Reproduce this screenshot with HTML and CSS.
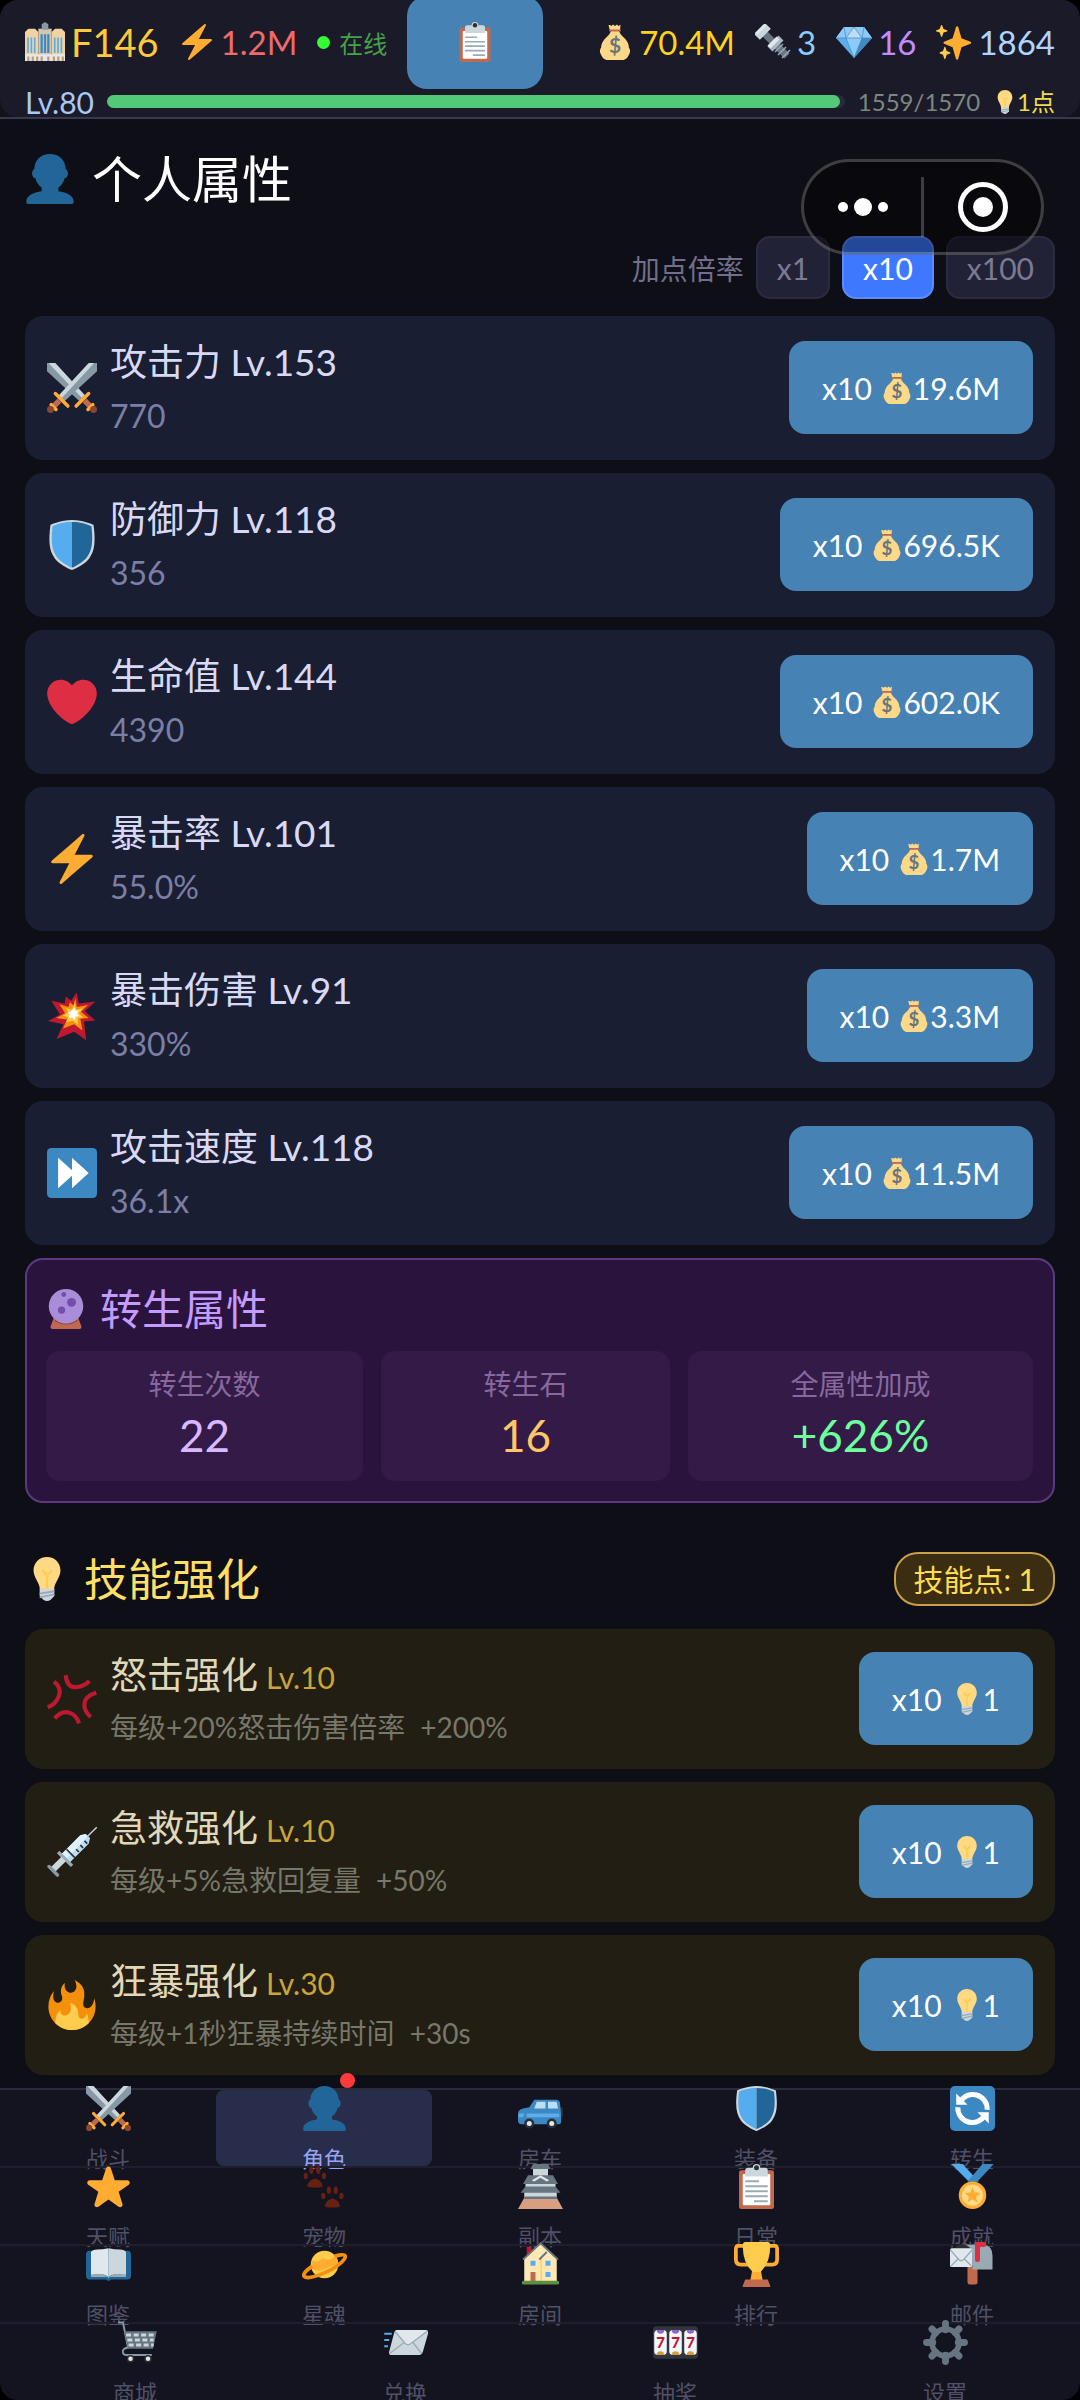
FILE: index.html
```html
<!DOCTYPE html>
<html lang="zh-CN">
<head>
    <meta charset="UTF-8">
    <meta name="viewport" content="width=device-width, initial-scale=1.0">
    <title>个人属性</title>
    <link rel="stylesheet" href="styles.css">
</head>
<body>
    <!-- Icon sprite -->
    <svg class="sprite" aria-hidden="true">
        <symbol id="i-city" viewBox="0 0 36 36">
            <path fill="#F3D2A2" d="M0 9l3-3h6l3 3v26H0zM24 9l3-3h6l3 3v26H24z"/>
            <path fill="#D5C6B0" d="M12 6h12v29H12z"/>
            <path fill="#8899A6" d="M15 2l3-2 3 2v5h-6z"/>
            <path fill="#E6E7E8" d="M0 29h36v6H0z"/>
            <path fill="#55ACEE" d="M2 14h1.500v14H2zM5 14h1.500v14H5zM8 14h1.500v14H8zM26 14h1.500v14H26zM29 14h1.500v14H29zM32 14h1.500v14H32z"/>
            <path fill="#3B88C3" d="M14 11h2v17h-2zM17 11h2v17h-2zM20 11h2v17h-2z"/>
            <path fill="#BE9D78" d="M2 31h2v4H2zM6 31h2v4H6zM10 31h2v4h-2zM14 31h2v4h-2zM20 31h2v4h-2zM25 31h2v4h-2zM29 31h2v4h-2zM33 31h2v4h-2z"/>
        </symbol>
        <symbol id="i-bolt" viewBox="0 0 36 36">
            <path fill="#FFAC33" d="M32.938 15.651C32.792 15.260 32.418 15 32 15H19.925L26.890 1.458c.219-.426.106-.947-.271-1.243C26.437.071 26.218 0 26 0c-.233 0-.466.082-.653.243L18 6.588 3.347 19.243c-.316.273-.430.714-.284 1.105S3.582 21 4 21h12.075L9.110 34.542c-.219.426-.106.947.271 1.243.182.144.401.215.619.215.233 0 .466-.082.653-.243L18 29.412l14.653-12.655c.317-.273.430-.714.285-1.106z"/>
        </symbol>
        <symbol id="i-clipboard" viewBox="0 0 36 36">
            <path fill="#C1694F" d="M32 34a2 2 0 01-2 2H6a2 2 0 01-2-2V7a2 2 0 012-2h24a2 2 0 012 2z"/>
            <path fill="#FFF" d="M29 32a1 1 0 01-1 1H8a1 1 0 01-1-1V9a1 1 0 011-1h20a1 1 0 011 1z"/>
            <path fill="#CCD6DD" d="M25 3h-4a3 3 0 00-6 0h-4a2 2 0 00-2 2v5h18V5a2 2 0 00-2-2z"/>
            <circle cx="18" cy="3" r="2" fill="#292F33"/>
            <path fill="#99AAB5" d="M9 13h11v1.500H9zM9 17h18v1.500H9zM9 21h18v1.500H9zM9 25h18v1.500H9zM16 29h11v1.500H16z"/>
        </symbol>
        <symbol id="i-money" viewBox="0 0 36 36">
            <path fill="#FDD888" d="M31.900 23.700c0-3-1.300-6-3.400-8.400-2.200-2.500-5-4.300-6.500-8.300h-8c-1.500 4-4.300 5.800-6.500 8.300-2.100 2.400-3.400 5.400-3.400 8.400-1.300 1.500-1.600 3.700-.6 5.700C5 33 7 36 11 36h14c4 0 6-3 7.500-6.600 1-2 .7-4.200-.6-5.700z"/>
            <path fill="#FDD888" d="M13 1l1.500 1L16 .5 18 2l2-1.500L21.500 2 23.500.7 23 7H13L11.500 1z"/>
            <path fill="#BF6952" d="M12.500 5.500h11q.8 1-0 2h-11q-.8-1 0-2z"/>
            <text x="18" y="29" text-anchor="middle" class="coin-sign">$</text>
        </symbol>
        <symbol id="i-screw" viewBox="0 0 36 36">
            <path stroke="#66757F" stroke-width="7" d="M10 10l22 22"/>
            <path stroke="#99AAB5" stroke-width="1.500" d="M20 28l8-8M23 31l8-8M27 34l8-8"/>
            <path stroke="#CCD6DD" stroke-width="8" d="M2 13L13 2"/>
            <path stroke="#E1E8ED" stroke-width="3" d="M1 10L10 1"/>
            <path stroke="#AAB8C2" stroke-width="7" d="M15 25l11-11"/>
            <path stroke="#E1E8ED" stroke-width="4" d="M14 23l9-9"/>
        </symbol>
        <symbol id="i-gem" viewBox="0 0 36 36">
            <path fill="#BDDDF4" d="M8 3h20l8 11H0z"/>
            <path fill="#5DADEC" d="M0 14l18 20 18-20z"/>
            <path fill="#8CCAF7" d="M8 3L0 14h10l8-11zM28 3l8 11H26L18 3z"/>
            <path fill="#4289C1" d="M26 14L18 34l18-20z"/>
            <path fill="#8CCAF7" d="M10 14h16l-8 20z"/>
            <path fill="none" stroke="#4289C1" stroke-width=".7" d="M0 14h36M8 3l2 11 8 20 8-20 2-11M10 14l8-11 8 11"/>
        </symbol>
        <symbol id="i-sparkles" viewBox="0 0 36 36">
            <path fill="#FFAC33" d="M34.500 17.800l-9-3.600L22.200 3c-.4-1-1.800-1-2.200 0l-3.400 11.200-8.500 3.500c-.9.300-.9 1.600 0 2l8.500 3.600L20 35c.3 1 1.800 1 2.200 0l3.300-11.700 9-3.500c.9-.4.900-1.600 0-2z"/>
            <path fill="#FFCC4D" d="M14 28.300l-3.300-1.200L9.400 23.300c-.2-.6-.9-.6-1.100 0L7 27.100l-3 1.200c-.6.200-.6 1 0 1.200l3 1.200 1.300 4c.2.600.9.600 1.100 0l1.300-4 3.300-1.200c.6-.2.6-1 0-1.200zM11 6.300L7.500 5 6.200 1.500c-.2-.6-1-.6-1.200 0L3.700 5 .4 6.300c-.5.200-.5.900 0 1.100l3.300 1.200L5 12.400c.2.600 1 .6 1.200 0l1.300-3.800L11 7.400c.5-.2.500-.9 0-1.100z"/>
        </symbol>
        <symbol id="i-bulb" viewBox="0 0 36 36">
            <path fill="#FFD983" d="M29 11.100C29 5 24.600 0 18 0S7 5 7 11.100c0 5.900 5.200 9.900 5.200 15.900h11.600C23.800 21 29 17 29 11.100z"/>
            <path fill="none" stroke="#FFCC4D" stroke-width="1.800" d="M18 27V15l-4-4M18 15l4-4"/>
            <path fill="#CCD6DD" d="M12 26h12v6l-3 3q-3 2-6 0l-3-3z"/>
            <path stroke="#99AAB5" stroke-width="1.500" d="M12 30l12-2M12 33l12-2.500"/>
        </symbol>
        <symbol id="i-person" viewBox="0 0 36 36">
            <path fill="#269" d="M24 26.800v-2.600c2-1.300 3.800-3.700 4.500-6.700 1.500-.1 2.400-1.700 2.400-3.500 0-1.600-.6-2.700-1.600-3.200C29 4.300 24.500 0 18 0S7 4.300 6.700 10.800c-1 .5-1.600 1.600-1.600 3.200 0 1.800.9 3.400 2.400 3.500.7 3 2.500 5.400 4.500 6.700v2.600c-6 .7-11 3.200-11 7.200v1c0 .6.4 1 1 1h32c.6 0 1-.4 1-1v-1c0-4-5-6.500-11-7.200z"/>
        </symbol>
        <symbol id="i-swords" viewBox="0 0 36 36">
            <path fill="#8899A6" d="M0 0l6 .5L28 24l-4 4L0 6z"/>
            <path fill="#CCD6DD" d="M1 0h5l21 23-2 2z"/>
            <path fill="#8899A6" d="M36 0v6L12 28l-4-4L30 .5z"/>
            <path fill="#CCD6DD" d="M34 0h-4L8 24l2 2z"/>
            <path stroke="#C1694F" stroke-width="4" d="M9 27l-6 6M27 27l6 6"/>
            <path stroke="#FFAC33" stroke-width="2.500" stroke-linecap="round" d="M6 22l9 9M30 22l-9 9M3 30l3.500 3.500M33 30l-3.500 3.500"/>
            <circle cx="2.500" cy="33.500" r="2.500" fill="#8A4633"/>
            <circle cx="33.500" cy="33.500" r="2.500" fill="#8A4633"/>
        </symbol>
        <symbol id="i-shield" viewBox="0 0 36 36">
            <path fill="#CCD6DD" d="M33.500 3.500S26 0 18 0 2.500 3.500 2.500 3.500C1 15 1.500 22 5.500 27.500 9 32.500 18 36 18 36s9-3.500 12.500-8.500C34.500 22 35 15 33.500 3.500z"/>
            <path fill="#55ACEE" d="M18 1.500c-6 0-11 1.500-14 3C2.800 15 3.400 21.500 7 26.500 10 31 18 34.400 18 34.400z"/>
            <path fill="#226699" d="M18 1.500c6 0 11 1.500 14 3 1.200 10.500.6 17-3 22-3 4.500-11 7.900-11 7.900z"/>
        </symbol>
        <symbol id="i-heart" viewBox="0 0 36 36">
            <path fill="#DD2E44" d="M35.885 11.833c0-5.450-4.418-9.868-9.867-9.868-3.308 0-6.227 1.633-8.018 4.129-1.791-2.496-4.710-4.129-8.017-4.129-5.450 0-9.868 4.417-9.868 9.868 0 .772.098 1.520.266 2.241C1.751 22.587 11.216 31.568 18 34.034c6.783-2.466 16.249-11.447 17.617-19.959.170-.721.268-1.469.268-2.242z"/>
        </symbol>
        <symbol id="i-boom" viewBox="0 0 36 36">
            <path fill="#BE1931" d="M21.300 1L23 9l11.800-1.500-7.600 7 7.600 6.800-8.100.7 1.500 13.500-8.600-6.100-12.700 5.200L11.800 24 .7 21.600 9.300 17 3.200 7l9.500 2 .8-5 3.900 3z"/>
            <path fill="#F4900C" d="M20.500 5l1 6.500 8-1.500-5 5 5.500 4.500-6 .5 1.500 8.500-6-4.500-8 3 3-6.500-8-1 6.500-3.500-4-6.500 6.500 2 1-3.500 2.500 2.500z"/>
            <path fill="#FFCC4D" d="M20 9l1 4.500 5-1-3 3.500 3 3-4 .5.500 5-4-3-5 1 2-3.500-4-1.500 4-2-2-3.500 4 1.500z"/>
            <path fill="#FFF" d="M20 12l.6 2.400 2.400-.6-1.500 2.200 1.500 2-2.400.3-.6 2.700-1.700-2-2.700.5 1-2.500-2-1.500 2.500-.5z"/>
        </symbol>
        <symbol id="i-forward" viewBox="0 0 36 36">
            <rect width="36" height="36" rx="3" fill="#3B88C3"/>
            <path fill="#FFF" d="M8 7v22l10-9v9l12-11L18 7v9z"/>
        </symbol>
        <symbol id="i-crystal" viewBox="0 0 36 36">
            <path fill="#BF6952" d="M7 26h22l3 8q0 2-2 2H6q-2 0-2-2z"/>
            <path fill="#8A4633" d="M8 26q10 10 20 0v3q-10 6-20 0z"/>
            <circle cx="18" cy="15.500" r="15.500" fill="#AA8DD8"/>
            <circle cx="23" cy="12" r="4" fill="#744EAA"/>
            <circle cx="14" cy="19" r="3.300" fill="#744EAA"/>
            <circle cx="16" cy="5" r="2.200" fill="#744EAA"/>
        </symbol>
        <symbol id="i-anger" viewBox="0 0 36 36">
            <g fill="none" stroke="#BE1931" stroke-width="3">
                <path d="M13.500.8c.5 6 3 9 7.500 8.700 4-.3 7-1.600 9.500-4.500"/>
                <path d="M5 5.500c4 3 5 6.500 3.500 10.500-1.300 3.500-4 6.500-8 8"/>
                <path d="M35.500 13.500c-5 1.500-8 4-8.500 7.500s.5 6.500 4.500 10"/>
                <path d="M5.500 32c3-3.500 7-5.500 11-4 3 1 5.500 4 6.500 7.500"/>
            </g>
        </symbol>
        <symbol id="i-syringe" viewBox="0 0 36 36">
            <path stroke="#CCD6DD" d="M28 8l8-8"/>
            <path fill="#BDDDF4" d="M24 6l4-1 3 3-1 4-14 14-6-6z"/>
            <path fill="#DDF1FA" d="M24 6l4-1 1 2-15 16-4-3z"/>
            <path stroke="#292F33" stroke-width="1.200" d="M14 16l6 6M21 16l2 2M24 13l2 2M27 10l2 2"/>
            <path stroke="#99AAB5" stroke-width="2.500" d="M8 18l10 10"/>
            <path stroke="#CCD6DD" stroke-width="4.500" d="M12 23l-8 8"/>
            <path stroke="#8899A6" stroke-width="2.500" stroke-linecap="round" d="M1.500 28.500l6 6"/>
        </symbol>
        <symbol id="i-fire" viewBox="0 0 36 36">
            <path fill="#F4900C" d="M35 19c0-2.062-.367-4.039-1.040-5.868-.460 5.389-3.333 8.157-6.335 6.868-2.812-1.208-.917-5.917-.777-8.164.236-3.809-.012-8.169-6.931-11.794 2.875 5.500.333 8.917-2.333 9.125-2.958.231-5.667-2.542-4.667-7.042-3.238 2.386-3.332 6.402-2.333 9 1.042 2.708-.042 4.958-2.583 5.208-2.840.280-4.418-3.041-2.963-8.333C2.520 10.965 1 14.805 1 19c0 9.389 7.611 17 17 17s17-7.611 17-17z"/>
            <path fill="#FFCC4D" d="M28.394 23.999c.148 3.084-2.561 4.293-4.019 3.709-2.106-.843-1.541-2.291-2.083-5.291s-2.625-5.083-5.708-6c2.250 6.333-1.247 8.667-3.080 9.084-1.872.426-3.753-.001-3.968-4.007C7.352 23.668 6 26.676 6 30c0 .368.023.730.055 1.090C9.125 34.124 13.342 36 18 36s8.875-1.876 11.945-4.910c.032-.360.055-.722.055-1.090 0-2.187-.584-4.236-1.606-6.001z"/>
        </symbol>
        <symbol id="i-car" viewBox="0 0 36 36">
            <rect x="33" y="17" width="3" height="8" rx="1" fill="#292F33"/>
            <path fill="#3B88C3" d="M13 11h18q2 0 2.500 2l1 9v7q0 1.500-2 1.500H3Q0 30.500 0 28v-6q0-3 4-4l5-1z"/>
            <path fill="#BDDDF4" d="M15 12.500h7V18h-9zM24 12.500h6q1 0 1.200 1L32 18h-8z"/>
            <path fill="#5DADEC" d="M7 22h26v3H7zM1 22h4l-1 3H0z"/>
            <circle cx="9" cy="30" r="4" fill="#292F33"/><circle cx="27" cy="30" r="4" fill="#292F33"/>
            <circle cx="9" cy="30" r="2" fill="#E1E8ED"/><circle cx="27" cy="30" r="2" fill="#E1E8ED"/>
        </symbol>
        <symbol id="i-refresh" viewBox="0 0 36 36">
            <rect width="36" height="36" rx="4" fill="#3B88C3"/>
            <path fill="none" stroke="#FFF" stroke-width="4" d="M8 13a11.500 11.500 0 0121.700 6M28 23a11.500 11.500 0 01-21.700-6"/>
            <path fill="#FFF" d="M5 6v9h9zM31 30v-9h-9z"/>
        </symbol>
        <symbol id="i-star" viewBox="0 0 36 36">
            <path fill="#FFAC33" d="M27.287 34.627c-.404 0-.806-.124-1.152-.371L18 28.422l-8.135 5.834c-.343.249-.749.372-1.153.372-.399 0-.804-.123-1.150-.371-.690-.495-.985-1.388-.718-2.194l3.034-9.792-8.062-5.681c-.685-.505-.970-1.393-.708-2.203.264-.808 1.016-1.357 1.866-1.363L12.947 13l3.179-9.549c.268-.809 1.023-1.353 1.874-1.353.851 0 1.606.545 1.875 1.353L23 13l10.027.025c.853.006 1.606.556 1.868 1.363.263.810-.022 1.698-.708 2.203l-8.062 5.681 3.034 9.792c.269.806-.026 1.699-.719 2.194-.343.246-.748.369-1.153.369z"/>
        </symbol>
        <symbol id="i-paws" viewBox="0 0 36 36">
            <g id="paw" fill="#662113">
                <path d="M10.500 11.500q-5 1-6.500 6 1.500 1.500 6 1.200 5 .3 6.500-1.200-1-5-6-6z"/>
                <ellipse cx="3" cy="9.500" rx="1.700" ry="2.500"/><ellipse cx="7.500" cy="5" rx="1.700" ry="3"/>
                <ellipse cx="13" cy="5" rx="1.700" ry="3"/><ellipse cx="17.500" cy="9.500" rx="1.700" ry="2.500"/>
            </g>
            <use href="#paw" x="14" y="16"/>
        </symbol>
        <symbol id="i-castle" viewBox="0 0 36 36">
            <path fill="#D99E82" d="M5 27h26l5 9H0z"/>
            <path fill="#CCD6DD" d="M12 3h12v7H12zM6 13h24v8H6zM5 22h26v5H5z"/>
            <path fill="#66757F" d="M12 0h12l2 4H10zM8 9h20l4 7H4zM6 18h24l4 5H2zM5 26h26v2H5z"/>
            <path fill="#E1E8ED" d="M11 13l7-4 7 4-2 1-5-3-5 3z"/>
        </symbol>
        <symbol id="i-medal" viewBox="0 0 36 36">
            <path fill="#55ACEE" d="M1 0h9l13 14h-8z"/>
            <path fill="#3B88C3" d="M35 0h-9L14 14h8z"/>
            <circle cx="18" cy="25" r="11" fill="#FFAC33"/>
            <circle cx="18" cy="25" r="8.500" fill="#FFD983"/>
            <path fill="#FFAC33" d="M18 18.500l1.700 4.300 4.600.3-3.500 3 1.100 4.400-3.900-2.400-3.900 2.400 1.100-4.400-3.500-3 4.600-.3z"/>
        </symbol>
        <symbol id="i-book" viewBox="0 0 36 36">
            <path fill="#269" d="M3 7h30q3 0 3 3v17q0 3-3 3H20q-2 2-4 0H3q-3 0-3-3V10q0-3 3-3z"/>
            <path fill="#E1E8ED" d="M4 8q1-2 5-2t9-1v23q-3-3-8-2t-6 1z"/>
            <path fill="#CCD6DD" d="M32 8q-1-2-5-2t-9-1v23q3-3 8-2t6 1z"/>
            <path fill="#99AAB5" d="M4 26q8-2 14 2 6-4 14-2v2H19l-1 1-1-1H4z"/>
        </symbol>
        <symbol id="i-planet" viewBox="0 0 36 36">
            <circle cx="18" cy="18" r="11" fill="#FFCC4D"/>
            <path fill="#FFAC33" d="M8 15q5 2 9-2 5 3 10-2 2 3 2 6-9 4-14 6-5 0-8-2z"/>
            <path fill="none" stroke="#F4900C" stroke-width="3" d="M8 19.500C2 23.500 0 27 2.500 28c3.500 1.500 12-1.500 20-5.500s13-9.500 12-11.500c-1-1.500-5-.5-8.500.5"/>
        </symbol>
        <symbol id="i-house" viewBox="0 0 36 36">
            <path fill="#BE1931" d="M7 4h4v8H7z"/>
            <path fill="#FFE8B6" d="M5 13L18 1l13 12v19H5z"/>
            <path fill="#FFCC4D" d="M18 13h1v19h-1z"/>
            <path fill="none" stroke="#66757F" stroke-width="1.500" d="M4 14L18 1l14 13M17 14l6-6"/>
            <path fill="#55ACEE" d="M10 15h4v4h-4zM22 15h4v4h-4zM22 24h4v4h-4z"/>
            <path fill="#C1694F" d="M10 24h4v8h-4z"/>
            <rect x="3" y="31" width="30" height="3" rx="1.500" fill="#5C913B"/>
        </symbol>
        <symbol id="i-trophy" viewBox="0 0 36 36">
            <path fill="none" stroke="#FFAC33" stroke-width="3" d="M9 3H3Q1.500 3 1.500 6v8q0 4 4 4h6M27 3h6q1.500 0 1.500 3v8q0 4-4 4h-6"/>
            <path fill="#FFAC33" d="M15 20h6l2 11H13z"/>
            <path fill="#FFCC4D" d="M9 0h18q2 0 2 3 0 14-8 21h-6Q7 17 7 3q0-3 2-3z"/>
            <path fill="#C1694F" d="M9 30h18l2 5v1H7v-1z"/>
        </symbol>
        <symbol id="i-mailbox" viewBox="0 0 36 36">
            <path fill="#C1694F" d="M14 20h8v12q0 2-2 2h-4q-2 0-2-2z"/>
            <path fill="#292F33" d="M3 6q3-5 9-4l6 4v4H3z"/>
            <path fill="#99AAB5" d="M10 2h17q7 1 7 9v11H18V8q-2-6-8-6z"/>
            <rect y="5" width="18" height="15" rx="1.500" fill="#E1E8ED"/>
            <path fill="none" stroke="#99AAB5" d="M0 6l7 8q2 2 4 0l7-8M1 19l6-6M17 19l-6-6"/>
            <path fill="none" stroke="#DD2E44" stroke-width="4" stroke-linecap="round" d="M22 14V2h5"/>
        </symbol>
        <symbol id="i-cart" viewBox="0 0 36 36">
            <path fill="none" stroke="#8899A6" stroke-width="1.500" d="M4 2h4l4 20q-5 1-4 4 0 2 3 2h20"/>
            <path fill="#66757F" d="M9 9h26l-3 14H12z"/>
            <path stroke="#CCD6DD" stroke-width="2.500" stroke-dasharray="4 2" d="M10.500 12h23M11.500 16h21M12.500 20h20"/>
            <circle cx="14" cy="31" r="3" fill="#292F33"/><circle cx="28" cy="31" r="3" fill="#292F33"/>
            <circle cx="14" cy="31" r="1.800" fill="#E1E8ED"/><circle cx="28" cy="31" r="1.800" fill="#E1E8ED"/>
        </symbol>
        <symbol id="i-envelope" viewBox="0 0 36 36">
            <path fill="#CCD6DD" d="M11 8h23q3 0 2 3l-4 14q-1 3-3 3H7q-3 0-2-3L9 10q.500-2 2-2z"/>
            <path fill="#E1E8ED" d="M10 8h25L22 20q-2 2-4 0z"/>
            <path fill="none" stroke="#99AAB5" d="M9.500 9L18 19q2 2 4 0L35.500 9M5 27l12-9M31 27l-7-9"/>
            <path stroke="#55ACEE" stroke-width="1.500" d="M1 11h6M1 16h4M1 21h3"/>
        </symbol>
        <symbol id="i-slots" viewBox="0 0 36 36">
            <rect y="5" width="36" height="26" rx="3" fill="#31373D"/>
            <path fill="#F5F8FA" d="M1 11q0-3 3-3h4q3 0 3 3v14q0 3-3 3H4q-3 0-3-3zM13 11q0-3 3-3h4q3 0 3 3v14q0 3-3 3h-4q-3 0-3-3zM25 11q0-3 3-3h4q3 0 3 3v14q0 3-3 3h-4q-3 0-3-3z"/>
            <path fill="#9266CC" d="M3 8h6q0 3-3 3T3 8zM15 8h6q0 3-3 3t-3-3zM27 8h6q0 3-3 3t-3-3z"/>
            <path fill="#D99E3C" d="M3 28h6q0-3-3-3t-3 3zM15 28h6q0-3-3-3t-3 3zM27 28h6q0-3-3-3t-3 3z"/>
            <text class="slot-digit" x="6" y="22" text-anchor="middle">7</text>
            <text class="slot-digit" x="18" y="22" text-anchor="middle">7</text>
            <text class="slot-digit" x="30" y="22" text-anchor="middle">7</text>
        </symbol>
        <symbol id="i-gear" viewBox="0 0 36 36">
            <g stroke="#66757F" stroke-width="5.500" stroke-linecap="round">
                <path d="M18 2.800v5M18 28.200v5M2.800 18h5M28.200 18h5M7.200 7.200l3 3M25.800 25.800l3 3M28.800 7.200l-3 3M10.200 25.800l-3 3"/>
            </g>
            <circle cx="18" cy="18" r="10.800" fill="none" stroke="#66757F" stroke-width="4.500"/>
        </symbol>
    </svg>

    <div class="app">
        <header class="topbar">
            <div class="topbar-inner">
                <div class="status-row">
                    <span class="status floor"><svg class="icon"><use href="#i-city"/></svg>F146</span>
                    <span class="status power"><svg class="icon"><use href="#i-bolt"/></svg>1.2M</span>
                    <span class="online"><i class="online-dot"></i>在线</span>
                    <button class="btn task-btn" aria-label="任务"><svg class="icon"><use href="#i-clipboard"/></svg></button>
                    <div class="resources">
                        <span class="status gold"><svg class="icon"><use href="#i-money"/></svg>70.4M</span>
                        <span class="status bolt"><svg class="icon"><use href="#i-screw"/></svg>3</span>
                        <span class="status gem"><svg class="icon"><use href="#i-gem"/></svg>16</span>
                        <span class="status soul"><svg class="icon"><use href="#i-sparkles"/></svg>1864</span>
                    </div>
                </div>
                <div class="exp-row">
                    <span class="exp-level">Lv.80</span>
                    <div class="exp-track"><div class="exp-fill" style="width: 99.3%"></div></div>
                    <span class="exp-text">1559/1570</span>
                    <span class="exp-points"><svg class="icon"><use href="#i-bulb"/></svg>1点</span>
                </div>
            </div>
        </header>

        <main class="content">
            <h1 class="page-title"><svg class="icon"><use href="#i-person"/></svg>个人属性</h1>

            <div class="multi-row">
                <span class="multi-label">加点倍率</span>
                <button class="multi-btn">x1</button>
                <button class="multi-btn active">x10</button>
                <button class="multi-btn">x100</button>
            </div>

            <!-- Stats -->
            <div class="list">
                <div class="card">
                    <svg class="icon card-icon"><use href="#i-swords"/></svg>
                    <div class="card-info">
                        <div class="card-name">攻击力 Lv.153</div>
                        <div class="card-value">770</div>
                    </div>
                    <button class="btn">x10<svg class="icon"><use href="#i-money"/></svg>19.6M</button>
                </div>
                <div class="card">
                    <svg class="icon card-icon"><use href="#i-shield"/></svg>
                    <div class="card-info">
                        <div class="card-name">防御力 Lv.118</div>
                        <div class="card-value">356</div>
                    </div>
                    <button class="btn">x10<svg class="icon"><use href="#i-money"/></svg>696.5K</button>
                </div>
                <div class="card">
                    <svg class="icon card-icon"><use href="#i-heart"/></svg>
                    <div class="card-info">
                        <div class="card-name">生命值 Lv.144</div>
                        <div class="card-value">4390</div>
                    </div>
                    <button class="btn">x10<svg class="icon"><use href="#i-money"/></svg>602.0K</button>
                </div>
                <div class="card">
                    <svg class="icon card-icon"><use href="#i-bolt"/></svg>
                    <div class="card-info">
                        <div class="card-name">暴击率 Lv.101</div>
                        <div class="card-value">55.0%</div>
                    </div>
                    <button class="btn">x10<svg class="icon"><use href="#i-money"/></svg>1.7M</button>
                </div>
                <div class="card">
                    <svg class="icon card-icon"><use href="#i-boom"/></svg>
                    <div class="card-info">
                        <div class="card-name">暴击伤害 Lv.91</div>
                        <div class="card-value">330%</div>
                    </div>
                    <button class="btn">x10<svg class="icon"><use href="#i-money"/></svg>3.3M</button>
                </div>
                <div class="card">
                    <svg class="icon card-icon"><use href="#i-forward"/></svg>
                    <div class="card-info">
                        <div class="card-name">攻击速度 Lv.118</div>
                        <div class="card-value">36.1x</div>
                    </div>
                    <button class="btn">x10<svg class="icon"><use href="#i-money"/></svg>11.5M</button>
                </div>

                <!-- Rebirth -->
                <section class="rebirth">
                    <h2 class="rebirth-title"><svg class="icon"><use href="#i-crystal"/></svg>转生属性</h2>
                    <div class="rebirth-grid">
                        <div class="rebirth-box">
                            <div class="rebirth-label">转生次数</div>
                            <div class="rebirth-num">22</div>
                        </div>
                        <div class="rebirth-box">
                            <div class="rebirth-label">转生石</div>
                            <div class="rebirth-num stone">16</div>
                        </div>
                        <div class="rebirth-box">
                            <div class="rebirth-label">全属性加成</div>
                            <div class="rebirth-num bonus">+626%</div>
                        </div>
                    </div>
                </section>
            </div>

            <!-- Skills -->
            <div class="skill-header">
                <h2 class="skill-title"><svg class="icon"><use href="#i-bulb"/></svg>技能强化</h2>
                <span class="skill-badge">技能点: 1</span>
            </div>
            <div class="list">
                <div class="card skill">
                    <svg class="icon card-icon"><use href="#i-anger"/></svg>
                    <div class="card-info">
                        <div class="card-name">怒击强化<span class="skill-lv">Lv.10</span></div>
                        <div class="skill-desc">每级+20%怒击伤害倍率 <span class="skill-total">+200%</span></div>
                    </div>
                    <button class="btn">x10<svg class="icon"><use href="#i-bulb"/></svg>1</button>
                </div>
                <div class="card skill">
                    <svg class="icon card-icon"><use href="#i-syringe"/></svg>
                    <div class="card-info">
                        <div class="card-name">急救强化<span class="skill-lv">Lv.10</span></div>
                        <div class="skill-desc">每级+5%急救回复量 <span class="skill-total">+50%</span></div>
                    </div>
                    <button class="btn">x10<svg class="icon"><use href="#i-bulb"/></svg>1</button>
                </div>
                <div class="card skill">
                    <svg class="icon card-icon"><use href="#i-fire"/></svg>
                    <div class="card-info">
                        <div class="card-name">狂暴强化<span class="skill-lv">Lv.30</span></div>
                        <div class="skill-desc">每级+1秒狂暴持续时间 <span class="skill-total">+30s</span></div>
                    </div>
                    <button class="btn">x10<svg class="icon"><use href="#i-bulb"/></svg>1</button>
                </div>
            </div>
        </main>

        <nav class="tabbar">
            <div class="tab-row">
                <button class="tab"><svg class="icon"><use href="#i-swords"/></svg>战斗</button>
                <button class="tab active"><svg class="icon"><use href="#i-person"/></svg>角色<i class="tab-dot"></i></button>
                <button class="tab"><svg class="icon"><use href="#i-car"/></svg>房车</button>
                <button class="tab"><svg class="icon"><use href="#i-shield"/></svg>装备</button>
                <button class="tab"><svg class="icon"><use href="#i-refresh"/></svg>转生</button>
            </div>
            <div class="tab-row">
                <button class="tab"><svg class="icon"><use href="#i-star"/></svg>天赋</button>
                <button class="tab"><svg class="icon"><use href="#i-paws"/></svg>宠物</button>
                <button class="tab"><svg class="icon"><use href="#i-castle"/></svg>副本</button>
                <button class="tab"><svg class="icon"><use href="#i-clipboard"/></svg>日常</button>
                <button class="tab"><svg class="icon"><use href="#i-medal"/></svg>成就</button>
            </div>
            <div class="tab-row">
                <button class="tab"><svg class="icon"><use href="#i-book"/></svg>图鉴</button>
                <button class="tab"><svg class="icon"><use href="#i-planet"/></svg>星魂</button>
                <button class="tab"><svg class="icon"><use href="#i-house"/></svg>房间</button>
                <button class="tab"><svg class="icon"><use href="#i-trophy"/></svg>排行</button>
                <button class="tab"><svg class="icon"><use href="#i-mailbox"/></svg>邮件</button>
            </div>
            <div class="tab-row">
                <button class="tab"><svg class="icon"><use href="#i-cart"/></svg>商城</button>
                <button class="tab"><svg class="icon"><use href="#i-envelope"/></svg>兑换</button>
                <button class="tab"><svg class="icon"><use href="#i-slots"/></svg>抽奖</button>
                <button class="tab"><svg class="icon"><use href="#i-gear"/></svg>设置</button>
            </div>
        </nav>

        <!-- Mini program menu -->
        <div class="capsule">
            <button class="capsule-btn" aria-label="更多">
                <svg width="52" height="52" viewBox="0 0 52 52" fill="#fff"><circle cx="6" cy="26" r="5"/><circle cx="26" cy="26" r="9"/><circle cx="46" cy="26" r="5"/></svg>
            </button>
            <button class="capsule-btn" aria-label="关闭">
                <svg width="52" height="52" viewBox="0 0 52 52"><circle cx="26" cy="26" r="22.500" fill="none" stroke="#fff" stroke-width="5"/><circle cx="26" cy="26" r="10" fill="#fff"/></svg>
            </button>
        </div>
    </div>
</body>
</html>
```
FILE: styles.css
```css
:root {
    --bg: #0e0e17;
    --bar: #1a1a28;
    --blue: #4682b4;
    --edge: 25px;
    --gap: 13px;
    --radius: 18px;
}

* {
    box-sizing: border-box;
    font-family: Lato, "Noto Sans CJK SC", sans-serif;
}

body {
    margin: 0;
    background: #000;
    color: #fff;
}

h1, h2 {
    margin: 0;
    font-weight: 400;
}

button {
    border: none;
    padding: 0;
    color: inherit;
    background: none;
    cursor: pointer;
}

.sprite {
    position: absolute;
    width: 0;
    height: 0;
}

.icon {
    flex: none;
    width: 36px;
    height: 36px;
}

.coin-sign {
    font-size: 21px;
    font-weight: 700;
    fill: #67757f;
}

.slot-digit {
    font-size: 12px;
    font-weight: 900;
    fill: #be1931;
}

.app {
    position: relative;
    display: flex;
    flex-direction: column;
    height: 100vh;
    overflow: hidden;
}

/* Buttons */
.btn {
    display: flex;
    align-items: center;
    justify-content: center;
    flex: none;
    height: 93px;
    padding: 0 33px;
    border-radius: 16px;
    background: var(--blue);
    color: #fff;
    font-size: 30px;
}

.btn .icon {
    width: 32px;
    height: 32px;
    margin-left: 9px;
}

/* Top bar */
.topbar {
    flex: none;
    border-bottom: 2px solid #38384e;
    background: linear-gradient(#000 50%, #12121b 50%);
}

.topbar-inner {
    padding: 0 var(--edge);
    border-radius: var(--radius);
    background: var(--bar);
}

.status-row {
    display: flex;
    align-items: center;
    gap: 20px;
    height: 84px;
}

.status {
    display: flex;
    align-items: center;
    gap: 6px;
    font-size: 33px;
}

.floor {
    font-size: 38px;
}

.floor .icon {
    width: 40px;
    height: 40px;
}

.floor { color: #ffc93c; }
.power { color: #f06a6a; }
.gold { color: #ffd21f; }
.bolt { color: #8ccbff; }
.gem { color: #c08cff; }
.soul { color: #b0d4ff; }

.online {
    display: flex;
    align-items: center;
    gap: 9px;
    color: #48a04c;
    font-size: 24px;
}

.online-dot {
    width: 13px;
    height: 13px;
    border-radius: 50%;
    background: #33ff33;
}

.task-btn {
    padding: 0 48px;
    border-radius: 20px;
}

.task-btn .icon {
    width: 40px;
    height: 40px;
    margin: 0;
}

.resources {
    display: flex;
    gap: 20px;
    margin-left: auto;
}

.exp-row {
    display: flex;
    align-items: center;
    gap: 13px;
    height: 33px;
    padding-top: 2px;
    font-size: 24px;
    line-height: 30px;
}

.exp-level {
    color: #a8c8f5;
    font-size: 30px;
}

.exp-track {
    flex: 1;
    height: 13px;
    border-radius: 7px;
    background: #2a2a3c;
}

.exp-fill {
    height: 100%;
    border-radius: 7px;
    background: #52c878;
}

.exp-text {
    color: #7a8880;
}

.exp-points {
    display: flex;
    align-items: center;
    color: #f0dc50;
}

.exp-points .icon {
    width: 24px;
    height: 24px;
}

/* Content */
.content {
    flex: 1;
    min-height: 0;
    padding: 30px var(--edge) 0;
    overflow: hidden;
    background: var(--bg);
}

.page-title {
    display: flex;
    align-items: center;
    gap: 17px;
    font-size: 50px;
    line-height: 60px;
}

.page-title .icon {
    width: 50px;
    height: 50px;
}

.multi-row {
    display: flex;
    align-items: center;
    justify-content: flex-end;
    gap: 12px;
    margin: 27px 0 17px;
}

.multi-label {
    color: #70708c;
    font-size: 28px;
}

.multi-btn {
    height: 63px;
    padding: 0 19px;
    border: 2px solid #2b2b3f;
    border-radius: 14px;
    background: #222236;
    color: #7a7a94;
    font-size: 30px;
}

.multi-btn.active {
    border-color: #5a8cff;
    background: #3d78ff;
    color: #fff;
}

/* Cards */
.list {
    display: flex;
    flex-direction: column;
    gap: var(--gap);
}

.card {
    display: flex;
    align-items: center;
    gap: 13px;
    padding: 16px 22px 17px;
    border-radius: var(--radius);
    background: #1a1e32;
}

.card-icon {
    width: 50px;
    height: 50px;
}

.card-info {
    flex: 1;
    padding-top: 3px;
}

.card-name {
    color: #d9d9f5;
    font-size: 37px;
    line-height: 54px;
}

.card-value {
    color: #7b7fa6;
    font-size: 32px;
    line-height: 54px;
}

/* Rebirth */
.rebirth {
    padding: 19px 20px 20px 19px;
    border: 2px solid #5b3a80;
    border-radius: var(--radius);
    background: #2a143e;
}

.rebirth-title {
    display: flex;
    align-items: center;
    gap: 14px;
    margin-bottom: 12px;
    color: #c49cff;
    font-size: 42px;
    line-height: 60px;
}

.rebirth-title .icon {
    width: 40px;
    height: 40px;
}

.rebirth-grid {
    display: flex;
    gap: 18px;
}

.rebirth-box {
    flex: 1 1 auto;
    padding: 12px 0 16px;
    border-radius: 14px;
    background: #331a47;
    text-align: center;
}

.rebirth-label {
    color: #87699f;
    font-size: 28px;
    line-height: 42px;
}

.rebirth-num {
    color: #d8b8ff;
    font-size: 44px;
    line-height: 60px;
}

.stone { color: #ffc566; }
.bonus { color: #6cff9c; }

/* Skills */
.skill-header {
    display: flex;
    align-items: center;
    justify-content: space-between;
    margin: 49px 0 23px;
}

.skill-title {
    display: flex;
    align-items: center;
    gap: 15px;
    color: #ffe066;
    font-size: 44px;
    line-height: 54px;
}

.skill-title .icon {
    width: 44px;
    height: 44px;
}

.skill-badge {
    padding: 0 17px;
    border: 2px solid #c8a046;
    border-radius: 24px;
    background: #3a2d12;
    color: #ffdc50;
    font-size: 30px;
    line-height: 50px;
}

.skill {
    background: #221e14;
}

.skill .card-name {
    color: #e0d8b8;
}

.skill-lv {
    margin-left: 8px;
    color: #cba538;
    font-size: 30px;
    line-height: 30px;
}

.skill-desc {
    color: #77776a;
    font-size: 28px;
    line-height: 50px;
}

.skill-total {
    margin-left: 8px;
}

/* Bottom tabs */
.tabbar {
    position: relative;
    flex: none;
    border-radius: 0 0 var(--radius) var(--radius);
    background: #141420;
}

/* each row paints over the labels of the one above */
.tab-row {
    position: relative;
    display: flex;
    height: 78px;
    border-top: 2px solid #1e1e2c;
}

.tab-row:first-child {
    border-top-color: #2b2b3b;
}

.tab {
    position: relative;
    display: flex;
    flex: 1;
    flex-direction: column;
    align-items: center;
    justify-content: center;
    gap: 17px;
    color: #505066;
    font-size: 22px;
    line-height: 22px;
}

.tab .icon {
    width: 45px;
    height: 45px;
}

.tab.active {
    border-radius: 8px;
    background: #292d4c;
    color: #98a4f0;
}

.tab-dot {
    position: absolute;
    top: -17px;
    left: calc(50% + 16px);
    width: 15px;
    height: 15px;
    border-radius: 50%;
    background: #ff3b3b;
}

/* Floating capsule */
.capsule {
    position: absolute;
    top: 159px;
    right: 36px;
    display: flex;
    align-items: center;
    width: 243px;
    height: 96px;
    border: 3px solid rgba(255, 255, 255, 0.22);
    border-radius: 48px;
    background: rgba(0, 0, 0, 0.4);
}

.capsule-btn {
    display: flex;
    flex: 1;
    align-items: center;
    justify-content: center;
    height: 60px;
}

.capsule-btn + .capsule-btn {
    border-left: 3px solid rgba(255, 255, 255, 0.22);
}
```
